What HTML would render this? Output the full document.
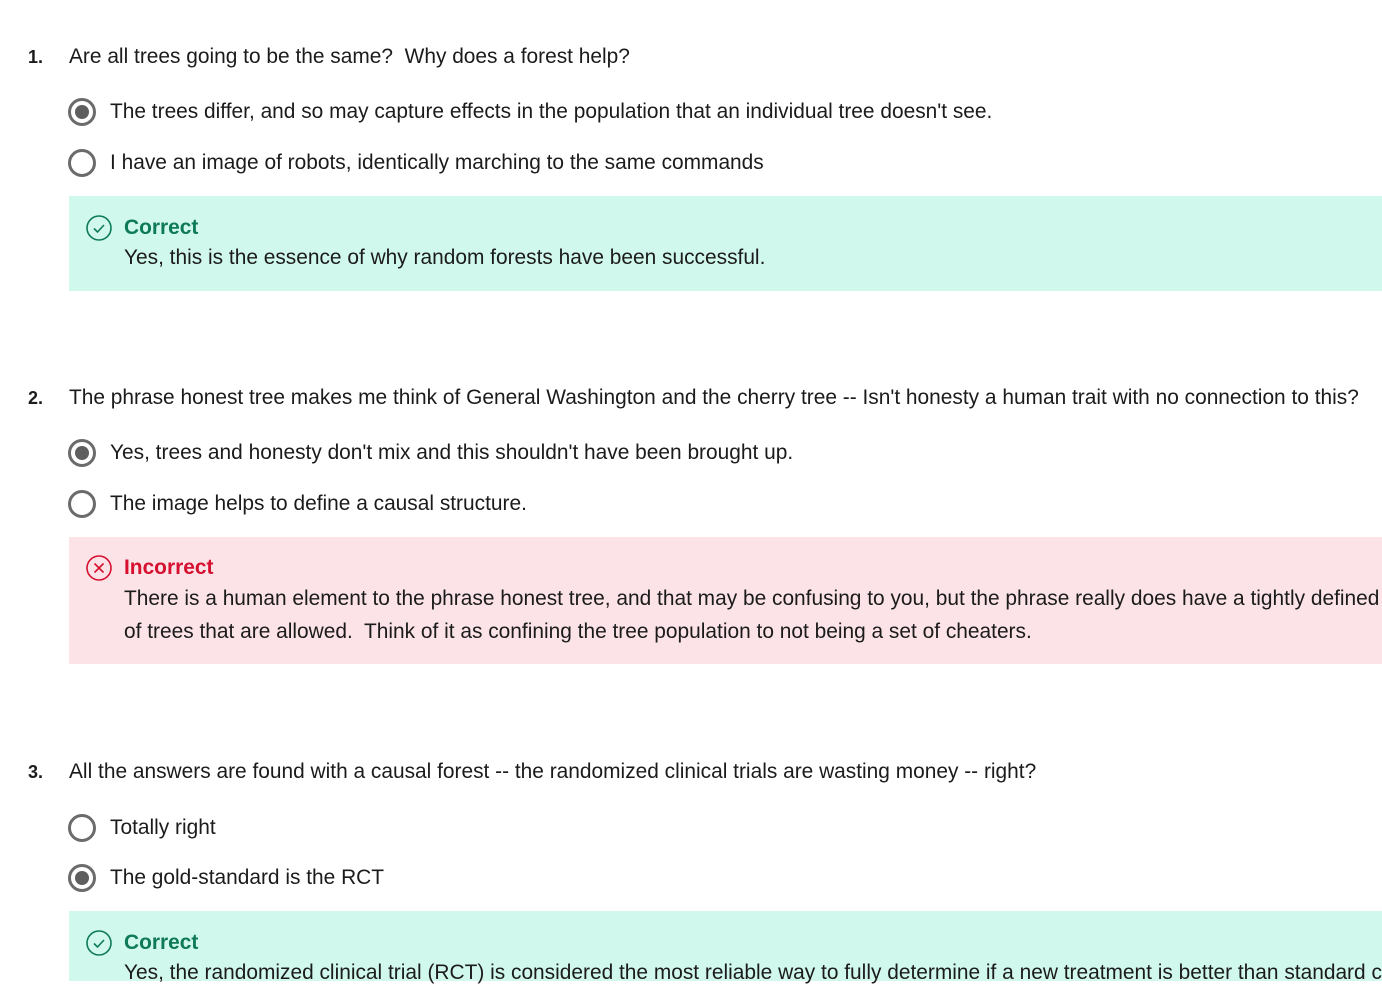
<!DOCTYPE html>
<html><head><style>
body{margin:0;background:#fff;font-family:"Liberation Sans",sans-serif;color:#1b1b1b;font-size:20.9px;width:1382px;height:981px;overflow:hidden;position:relative}
.a{position:absolute;white-space:nowrap;line-height:24px}
.n{font-weight:bold;font-size:18px}
.r{position:absolute;width:22px;height:22px;border:3px solid #6b6b6b;border-radius:50%;box-sizing:content-box}
.r.s::after{content:"";position:absolute;left:4px;top:4px;width:14px;height:14px;border-radius:50%;background:#5e5e5e}
.box{position:absolute;left:69px;right:0}
.g{background:#d1f8ec}.p{background:#fbe3e7}
.t{font-weight:bold}
</style></head><body>
<div class="a n" style="left:28px;top:45px">1.</div>
<div class="a" style="left:69px;top:45px">Are all trees going to be the same?&nbsp; Why does a forest help?</div>
<div class="r s" style="left:68px;top:98px"></div>
<div class="a" style="left:110px;top:100px">The trees differ, and so may capture effects in the population that an individual tree doesn't see.</div>
<div class="r" style="left:68px;top:149px"></div>
<div class="a" style="left:110px;top:151px">I have an image of robots, identically marching to the same commands</div>
<div class="box g" style="top:196px;height:95px"></div>
<svg class="a" style="left:85px;top:214px" width="28" height="28" viewBox="0 0 28 28"><circle cx="14" cy="14" r="12" fill="none" stroke="#0e7a57" stroke-width="1.6"/><path d="M9 14.5l3.5 3.5 6.5-7" fill="none" stroke="#0e7a57" stroke-width="1.6"/></svg>
<div class="a t" style="left:124px;top:216px;color:#0e7a57">Correct</div>
<div class="a" style="left:124px;top:246px">Yes, this is the essence of why random forests have been successful.</div>

<div class="a n" style="left:28px;top:386px">2.</div>
<div class="a" style="left:69px;top:386px">The phrase honest tree makes me think of General Washington and the cherry tree -- Isn't honesty a human trait with no connection to this?</div>
<div class="r s" style="left:68px;top:439px"></div>
<div class="a" style="left:110px;top:441px">Yes, trees and honesty don't mix and this shouldn't have been brought up.</div>
<div class="r" style="left:68px;top:490px"></div>
<div class="a" style="left:110px;top:492px">The image helps to define a causal structure.</div>
<div class="box p" style="top:537px;height:127px"></div>
<svg class="a" style="left:85px;top:554px" width="28" height="28" viewBox="0 0 28 28"><circle cx="14" cy="14" r="12" fill="none" stroke="#d6102f" stroke-width="1.6"/><path d="M9.5 9.5l9 9M18.5 9.5l-9 9" stroke="#d6102f" stroke-width="1.6"/></svg>
<div class="a t" style="left:124px;top:556px;color:#d6102f">Incorrect</div>
<div class="a" style="left:124px;top:587px">There is a human element to the phrase honest tree, and that may be confusing to you, but the phrase really does have a tightly defined set</div>
<div class="a" style="left:124px;top:620px">of trees that are allowed.&nbsp; Think of it as confining the tree population to not being a set of cheaters.</div>

<div class="a n" style="left:28px;top:760px">3.</div>
<div class="a" style="left:69px;top:760px">All the answers are found with a causal forest -- the randomized clinical trials are wasting money -- right?</div>
<div class="r" style="left:68px;top:814px"></div>
<div class="a" style="left:110px;top:816px">Totally right</div>
<div class="r s" style="left:68px;top:864px"></div>
<div class="a" style="left:110px;top:866px">The gold-standard is the RCT</div>
<div class="box g" style="top:911px;height:70px"></div>
<svg class="a" style="left:85px;top:929px" width="28" height="28" viewBox="0 0 28 28"><circle cx="14" cy="14" r="12" fill="none" stroke="#0e7a57" stroke-width="1.6"/><path d="M9 14.5l3.5 3.5 6.5-7" fill="none" stroke="#0e7a57" stroke-width="1.6"/></svg>
<div class="a t" style="left:124px;top:931px;color:#0e7a57">Correct</div>
<div class="a" style="left:124px;top:961px">Yes, the randomized clinical trial (RCT) is considered the most reliable way to fully determine if a new treatment is better than standard care.</div>
</body></html>
